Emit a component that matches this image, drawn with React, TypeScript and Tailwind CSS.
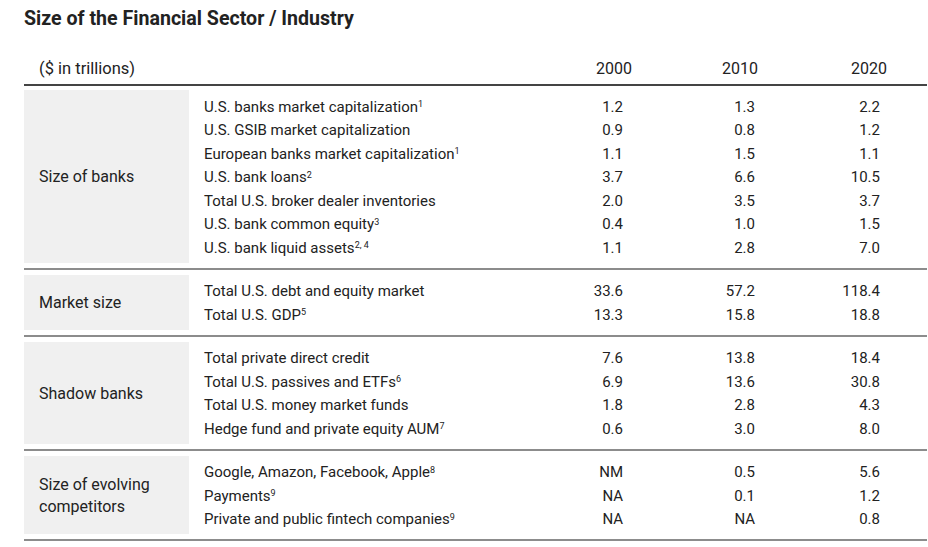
import React from 'react';

type Row = { label: string; note?: string; v: [string, string, string] };
type Section = { title: string; rows: Row[] };

const sections: Section[] = [
  {
    title: 'Size of banks',
    rows: [
      { label: 'U.S. banks market capitalization', note: '1', v: ['1.2', '1.3', '2.2'] },
      { label: 'U.S. GSIB market capitalization', v: ['0.9', '0.8', '1.2'] },
      { label: 'European banks market capitalization', note: '1', v: ['1.1', '1.5', '1.1'] },
      { label: 'U.S. bank loans', note: '2', v: ['3.7', '6.6', '10.5'] },
      { label: 'Total U.S. broker dealer inventories', v: ['2.0', '3.5', '3.7'] },
      { label: 'U.S. bank common equity', note: '3', v: ['0.4', '1.0', '1.5'] },
      { label: 'U.S. bank liquid assets', note: '2, 4', v: ['1.1', '2.8', '7.0'] },
    ],
  },
  {
    title: 'Market size',
    rows: [
      { label: 'Total U.S. debt and equity market', v: ['33.6', '57.2', '118.4'] },
      { label: 'Total U.S. GDP', note: '5', v: ['13.3', '15.8', '18.8'] },
    ],
  },
  {
    title: 'Shadow banks',
    rows: [
      { label: 'Total private direct credit', v: ['7.6', '13.8', '18.4'] },
      { label: 'Total U.S. passives and ETFs', note: '6', v: ['6.9', '13.6', '30.8'] },
      { label: 'Total U.S. money market funds', v: ['1.8', '2.8', '4.3'] },
      { label: 'Hedge fund and private equity AUM', note: '7', v: ['0.6', '3.0', '8.0'] },
    ],
  },
  {
    title: 'Size of evolving competitors',
    rows: [
      { label: 'Google, Amazon, Facebook, Apple', note: '8', v: ['NM', '0.5', '5.6'] },
      { label: 'Payments', note: '9', v: ['NA', '0.1', '1.2'] },
      { label: 'Private and public fintech companies', note: '9', v: ['NA', 'NA', '0.8'] },
    ],
  },
];

function SectionBlock({ section }: { section: Section }) {
  return (
    <div className="flex">
      <div className="w-[165px] shrink-0 bg-[#f0f0f0] pl-[15px] pr-2 pt-[2px] flex items-center text-[16px] leading-[22px]">
        {section.title}
      </div>
      <div className="flex-1 pt-[5px] pb-[3px]">
        {section.rows.map((row) => (
          <div key={row.label} className="flex items-center h-[23.5px] pl-[15px] pr-[47px] text-[15px]">
            <div className="flex-1 whitespace-nowrap">
              {row.label}
              {row.note && <sup className="text-[9px]">{row.note}</sup>}
            </div>
            <div className="w-[60px] text-right">{row.v[0]}</div>
            <div className="w-[132px] text-right">{row.v[1]}</div>
            <div className="w-[125px] text-right">{row.v[2]}</div>
          </div>
        ))}
      </div>
    </div>
  );
}

export default function App() {
  return (
    <div className="w-[928px] h-[547px] bg-white text-[#222] font-['Roboto',sans-serif] overflow-hidden">
      <h1 className="pl-6 pt-[7px] text-[19.6px] font-bold leading-[24px]">
        Size of the Financial Sector / Industry
      </h1>

      <div className="ml-6 w-[903px]">
        {/* Column headers */}
        <div className="flex items-end h-[55px] pb-[3px] pr-[40px] border-b-2 border-[#444] text-[16px] leading-[24px]">
          <div className="flex-1 pl-[15px] text-[16.5px]">($ in trillions)</div>
          <div className="w-[60px] text-right">2000</div>
          <div className="w-[126px] text-right">2010</div>
          <div className="w-[129px] text-right">2020</div>
        </div>

        <div className="mt-[4px]">
          {sections.map((s) => (
            <div key={s.title}>
              <SectionBlock section={s} />
              <div className="h-[2px] bg-[#8c8c8c] my-[5px]" />
            </div>
          ))}
        </div>
      </div>
    </div>
  );
}
